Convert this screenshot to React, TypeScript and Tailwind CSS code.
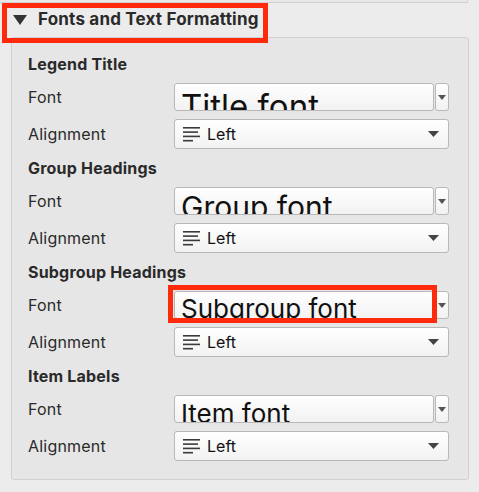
import React from "react";

const font = { fontFamily: "Inter, 'Noto Sans', sans-serif" };

function AlignIcon() {
  return (
    <svg width="18" height="16" viewBox="0 0 18 16" className="shrink-0">
      <rect x="0" y="1" width="17" height="1.6" fill="#3a3a3a" />
      <rect x="0" y="5.3" width="15" height="1.6" fill="#3a3a3a" />
      <rect x="0" y="9.6" width="17" height="1.6" fill="#3a3a3a" />
      <rect x="0" y="13.9" width="10" height="1.6" fill="#3a3a3a" />
    </svg>
  );
}

function Section({
  title,
  fontText,
  textClass,
  highlight,
}: {
  title: string;
  fontText: string;
  textClass: string;
  highlight?: boolean;
}) {
  return (
    <div className="flex flex-col">
      <div className="h-[20px] leading-[20px] text-[16px] font-bold text-[#2a2a2a] tracking-[0.2px]">{title}</div>
      <div className="mt-[9px] flex items-center h-[28px] relative">
        <div className="w-[146px] text-[16px] text-[#2a2a2a] tracking-[0.2px]">Font</div>
        <div className="w-[260px] h-[28px] overflow-hidden rounded-[3px] border border-[#b8b8b8] bg-gradient-to-b from-[#ffffff] to-[#f2f2f2] pl-[6px]">
          <div className={"leading-none text-[#111] whitespace-nowrap " + textClass}>{fontText}</div>
        </div>
        <div className="ml-[1px] w-[14px] h-[28px] rounded-[3px] border border-[#b8b8b8] bg-gradient-to-b from-[#ffffff] to-[#f2f2f2] flex items-center justify-center">
          <svg width="8" height="5" viewBox="0 0 8 5">
            <polygon points="0,0 8,0 4,5" fill="#555" />
          </svg>
        </div>
        {highlight && (
          <div className="absolute left-[140px] top-[-6px] w-[269px] h-[38px] border-[5px] border-[#ff2a0c]" />
        )}
      </div>
      <div className="mt-[8px] flex items-center h-[30px]">
        <div className="w-[146px] text-[16px] text-[#2a2a2a] tracking-[0.2px]">Alignment</div>
        <div className="w-[275px] h-[30px] rounded-[3px] border border-[#b8b8b8] bg-gradient-to-b from-[#ffffff] to-[#f2f2f2] flex items-center pl-[8px] pr-[9px]">
          <AlignIcon />
          <span className="ml-[6px] text-[16px] text-[#111]">Left</span>
          <div className="flex-1" />
          <svg width="11" height="6" viewBox="0 0 11 6">
            <polygon points="0,0 11,0 5.5,6" fill="#444" />
          </svg>
        </div>
      </div>
      <div className="h-[9px]" />
    </div>
  );
}

export default function App() {
  return (
    <div className="w-[479px] h-[492px] bg-[#ececec] relative overflow-hidden" style={font}>
      <div className="h-[3px] w-[468px] border-b border-r border-[#d0d0d0] bg-[#e8e8e8]" />
      <div className="h-[34px] flex items-center pl-[13px] relative">
        <svg width="14" height="10" viewBox="0 0 14 10">
          <polygon points="0,0 14,0 7,10" fill="#333" />
        </svg>
        <span className="ml-[11px] text-[17px] font-bold text-[#2a2a2a] tracking-[0.2px]">Fonts and Text Formatting</span>
        <div className="absolute left-[2px] top-0 w-[266px] h-[40px] border-[5px] border-[#ff2a0c]" />
      </div>
      <div className="ml-[11px] w-[458px] h-[443px] rounded-[3px] border border-[#d0d0d0] bg-[#e6e6e6] pt-[16px] pl-[16px]">
        <Section title="Legend Title" fontText="Title font" textClass="text-[33px] pt-[6px]" />
        <Section title="Group Headings" fontText="Group font" textClass="text-[30px] pt-[4px]" />
        <Section title="Subgroup Headings" fontText="Subgroup font" textClass="text-[26px] pt-[4px]" highlight />
        <Section title="Item Labels" fontText="Item font" textClass="text-[26px] pt-[5px]" />
      </div>
    </div>
  );
}
